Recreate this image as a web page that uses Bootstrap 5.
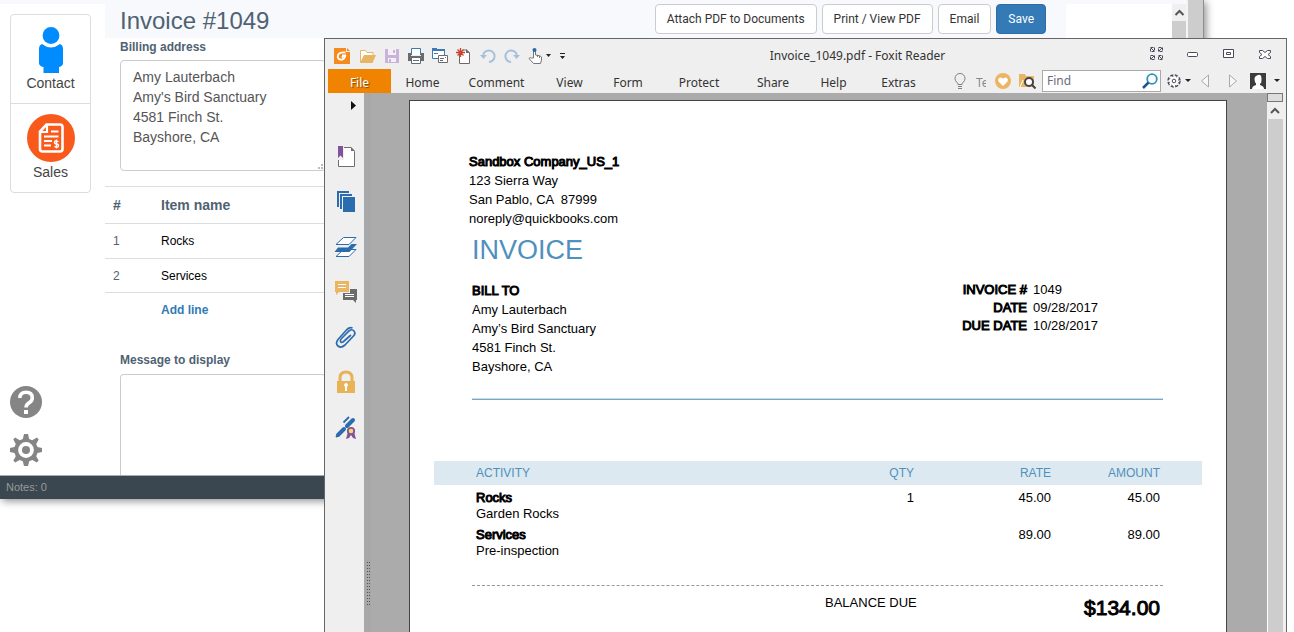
<!DOCTYPE html>
<html lang="en">
<head>
<meta charset="utf-8">
<meta name="viewport" content="width=device-width, initial-scale=1">
<title>Invoice #1049</title>
<link href="https://cdn.jsdelivr.net/npm/bootstrap@5.3.0/dist/css/bootstrap.min.css" rel="stylesheet">
<style>
body{font-family:"Liberation Sans",Arial,sans-serif;font-size:12px;background:#fff;color:#000}
button{font-family:inherit}
svg{display:block;flex:none}
.plain{border:0;background:none;padding:0;color:inherit}
/* application window */
.app-win{margin-right:90px;background:#fff;border-right:1px solid #8e8e8e;box-shadow:2px 2px 8px rgba(0,0,0,.45)}
.app-strip{height:4px;background:#f7f9fc}
.app-side{width:105px;padding:10px 0 9px 10px}
.side-card{width:81px;border:1px solid #ddd;border-radius:4px;font-size:14px;line-height:20px;color:#444}
.side-card button{display:block;width:100%}
.side-card button:first-child{border-bottom:1px solid #ddd;padding:12px 0 10px}
.side-card button:last-child{padding:10px 0}
.app-head{height:34px;background:#f7f9fc;padding:0 20px 0 15px;gap:5px}
.app-head h1{font-size:24px;line-height:34px;color:#4f6273}
.btn-app{font:12px/18px Roboto,sans-serif;padding:5px 11px;border:1px solid #ccc;border-radius:4px;background:#fff;color:#333}
.btn-app.primary{background:#337ab7;border-color:#2e6da4;color:#fff}
.app-blank{width:106px;background:#fff}
.app-scroll{width:14px;background:#f0f0f0}
.app-scroll .thumb,.app-outer{background:#cdcdcd}
.app-outer{width:17px;border-left:2px solid #f4f4f4}
.form-pad{padding-left:15px}
.field-label{display:block;font-weight:700;color:#4f6273;line-height:18px}
.field-box{display:block;width:206px;border:1px solid #ccc;border-radius:4px;padding:6px 12px;font-size:14px;line-height:20px;color:#555;resize:none;overflow:hidden}
.address{height:111px;margin-top:4px}
.message{height:101px;margin-top:5px;border-bottom:0;border-radius:4px 4px 0 0}
.size-grip{right:1px;bottom:2px}
.lines{width:100%;border-top:1px solid #ddd;margin-top:15px}
.lines th,.lines td{border-bottom:1px solid #ddd;padding:0 8px;line-height:18px}
.lines th{font-size:14px;color:#4f6273;height:37px}
.lines tbody tr:first-child td{height:35px}
.lines tbody tr:last-child td{height:34px}
.lines .num{width:48px;color:#4f6273}
.add-line{font-weight:700;color:#337ab7;text-decoration:none;margin-left:56px;line-height:18px}
.app-foot{background:#3a4750;border-top:1px solid #aaa;color:#999;font-size:11px;line-height:23px;padding-left:6px}
/* reader window */
.reader{position:absolute;left:324px;right:7px;top:38px;bottom:0;background:#efefef;border:1px solid #666;border-bottom:0;overflow:hidden;font-family:"Noto Sans",Tahoma,sans-serif;color:#333}
.title-row{height:30px;padding:4px 13px 0 9px}
.title-row .tools{gap:8px}
.title-row .tools button:first-child{margin-right:2px}
.caption{font-size:12px;line-height:18px}
.win-ctl{gap:20px;margin-bottom:4px}
.tab-row{height:24px;padding:0 5px 0 3px}
.tabs{display:grid;grid-template-columns:63px 63px 85px 61px 56px 86px 62px 59px 71px}
.tabs button{line-height:20px;padding-top:4px;text-align:center}
.tabs .file{background:#f08300;color:#fff;text-shadow:1px 1px 1px #7a4a10}
.tab-tools{gap:6px}
.tell,.bulb{margin-right:3px}
.tell{width:10px;overflow:hidden;color:#888;line-height:20px;padding-top:3px}
.heart{margin-right:2px}
.prev{margin:0 12px 0 3px}
.next{margin-right:6px}
.find{width:119px;height:22px;border:1px solid #aaa;background:#fff;padding-right:2px}
.find input{width:94px;border:0;outline:0;background:none;padding:0 4px;line-height:18px}
.find input::placeholder{color:#6b6b7a}
.rail{width:39px;padding:6px 0 0 9px}
.rail-list{gap:21px;margin-top:34px}
.grip{width:7px;background:#a6a8aa}
.canvas-area{background:#ababab}
.grip svg{margin-top:468px}
.sheet{margin:7px 40px 0 38px;border:1px solid #444;border-bottom:0;background:#fff;padding:51px 24px 0;font:13px/19px "Liberation Sans",Arial,sans-serif;color:#000}
.heavy{font-weight:400;-webkit-text-stroke:1px #000}
.company{padding-left:35px}
.sheet-in{padding:0 38px}
.sheet h2{font-size:27px;line-height:34px;color:#5090bd;margin:5px 0 14px}
.meta{display:grid;grid-template-columns:auto 67px;column-gap:6px;line-height:18px;margin-right:64px;align-content:start}
.meta dt{text-align:right}
.rule{height:2px;background:linear-gradient(#c8dcea 50%,#78a6c6 50%);margin:22px 39px 61px 38px}
.acts{width:100%;line-height:16px}
.acts th{background:#dce9f1;color:#5090bd;font-weight:400;font-size:12px;line-height:24px;padding:0}
.acts td{padding:5px 0 0;vertical-align:top}
.acts .a{padding-left:42px}
.acts .q{width:100px;text-align:right}
.acts .r{width:137px;text-align:right}
.acts .m{width:151px;text-align:right;padding-right:42px}
.due{margin:26px 39px 0 38px;border-top:1px dashed #999;padding-top:7px}
.due>div{width:338px;padding-right:3px}
.total{font-size:21px;line-height:30px}
.r-scroll{width:19px;background:#efefef}
.r-scroll .split{height:9px;border:1px solid #777;background:#ddd}
.r-scroll .up{height:17px}
.r-scroll .thumb{background:#cdcdcd;border-left:1px solid #fff}
.r-scroll>*{width:16px}
</style>
</head>
<body>
<div class="position-relative min-vh-100 overflow-hidden">
<div class="app-win">
  <div class="d-flex">
    <div class="flex-grow-1">
      <div class="app-strip"></div>
      <div class="d-flex">
        <nav class="app-side d-flex flex-column flex-shrink-0">
          <div class="side-card">
            <button class="plain"><svg class="mx-auto" width="24" height="46" viewBox="0 0 24 46" fill="#008bff"><circle cx="12" cy="8.500" r="8.400"/><path d="M3 17q9 7 18 0q3 1 3 5v14q0 3-4 4v6H4.500v-6Q0 39 0 36V22q0-4 3-5z"/></svg>Contact</button>
            <button class="plain"><svg class="mx-auto" width="48" height="48" viewBox="0 0 48 48"><circle cx="24" cy="24" r="24" fill="#f95a1c"/><path d="M19.500 10.500H33q2.500 0 2.500 2.500v22q0 2.500-2.500 2.500H15.500q-2.500 0-2.500-2.500V17.500z" fill="none" stroke="#fff" stroke-width="2.600"/><path d="M20 10.500v7.500h-7M24 17.500h7.500M17 22.500h14.500M17 27h8M17 31.500h7" stroke="#fff" stroke-width="2.200" fill="none"/><path d="M31.500 27.500q-4-1.500-4 .5t2 2t2 2t-4 .5M29.500 25.500v9" stroke="#fff" stroke-width="1.400" fill="none"/></svg>Sales</button>
          </div>
          <div class="mt-auto d-grid gap-3 justify-content-start">
            <button class="plain" aria-label="Help"><svg width="32" height="32" viewBox="0 0 32 32"><circle cx="16" cy="16" r="16" fill="#858585"/><path d="M9.800 12q0-5.700 6.200-5.700T22.300 12q0 2.700-3.100 4.800T16 21.500" fill="none" stroke="#fff" stroke-width="3.600"/><path d="M14 24h4v4h-4z" fill="#fff"/></svg></button>
            <button class="plain" aria-label="Settings"><svg width="32" height="32" viewBox="0 0 32 32"><path d="M14 0h4l1.200 5 3 1.300 4.700-2.700 1.800 1.800-2.500 4.500L27.500 13l4.500 1v4l-4.500 1-1.300 3.200 2.500 4.400-1.900 1.900-4.500-2.600-3.100 1.300L18 32h-4l-1.200-4.800-3.100-1.300-4.500 2.600-1.900-1.900 2.500-4.400L4.500 19 0 18v-4l4.500-1 1.300-3.100-2.500-4.500 1.800-1.800 4.700 2.700 3-1.300z" fill="#858585"/><circle cx="16" cy="16" r="7.900" fill="#fff"/><circle cx="16" cy="16" r="4" fill="#858585"/></svg></button>
          </div>
        </nav>
        <main class="flex-grow-1">
          <div class="app-head d-flex align-items-start">
            <h1 class="mb-0 me-auto">Invoice #1049</h1>
            <button class="btn btn-app">Attach PDF to Documents</button>
            <button class="btn btn-app">Print / View PDF</button>
            <button class="btn btn-app">Email</button>
            <button class="btn btn-app primary">Save</button>
          </div>
          <div class="form-pad">
            <label class="field-label" for="addr">Billing address</label>
            <div class="position-relative d-inline-block align-top">
              <textarea id="addr" class="field-box address">Amy Lauterbach
Amy's Bird Sanctuary
4581 Finch St.
Bayshore, CA</textarea>
              <svg class="size-grip position-absolute" width="8" height="5" viewBox="0 0 8 5" fill="#bbb"><path d="M1 3h2v2H1zM4 3h2v2H4zM4 0h2v2H4z"/></svg>
            </div>
          </div>
          <table class="lines">
            <thead><tr><th class="num">#</th><th>Item name</th></tr></thead>
            <tbody><tr><td class="num">1</td><td>Rocks</td></tr><tr><td class="num">2</td><td>Services</td></tr></tbody>
          </table>
          <div class="pt-2 pb-4"><a href="#" class="add-line">Add line</a></div>
          <div class="form-pad">
            <label class="field-label pt-2" for="msg">Message to display</label>
            <textarea id="msg" class="field-box message"></textarea>
          </div>
        </main>
        <div class="app-blank flex-shrink-0"></div>
        <div class="app-scroll flex-shrink-0 d-flex flex-column">
          <svg width="14" height="17" viewBox="0 0 14 17"><path d="M3.500 11L7.500 7l4 4" fill="none" stroke="#555" stroke-width="2"/></svg>
          <div class="thumb flex-grow-1"></div>
        </div>
      </div>
    </div>
    <div class="app-outer flex-shrink-0"></div>
  </div>
  <footer class="app-foot">Notes: 0</footer>
</div>

<section class="reader d-flex flex-column">
  <header class="title-row d-flex align-items-center">
    <div class="tools d-flex align-items-center">
      <button class="plain" aria-label="Reader"><svg width="16" height="16" viewBox="0 0 16 16"><path d="M0 0h12v4h4v12H0z" fill="#f58a1f"/><path d="M13 0l3 3h-3z" fill="#f58a1f"/><path d="M11.500 4.500Q4 4 3.700 8.500q.3 3.500 4 3.200Q11 11 11.300 7.500H8M7.800 9.500l2.500-2" fill="none" stroke="#fff" stroke-width="1.800"/></svg></button>
      <button class="plain" aria-label="Open"><svg width="16" height="16" viewBox="0 0 16 16"><path d="M.5 14V2.500h5l1.500 2h6V7" fill="#fff" stroke="#e8b565"/><path d="M0 15L4 7h12l-3.500 8z" fill="#e8b565"/></svg></button>
      <button class="plain" aria-label="Save"><svg width="16" height="16" viewBox="0 0 16 16"><path d="M1 1h14v14H1z" fill="#c9b3d8"/><path d="M4 1h8v6H4zM4 10h8v4H4z" fill="#f4f0f6"/><path d="M9 2h2v3H9zM5 11h2v3H5z" fill="#c9b3d8"/></svg></button>
      <button class="plain" aria-label="Print"><svg width="16" height="16" viewBox="0 0 16 16"><path d="M0 5h3v3h10V5h3v8H0z" fill="#6b6b6b"/><path d="M3.500 7V.5h9V7" fill="#fff" stroke="#3c79b5"/><path d="M3.500 9.500h9v6h-9z" fill="#fff" stroke="#6b6b6b"/><path d="M5 12.500h6" stroke="#3c79b5"/></svg></button>
      <button class="plain" aria-label="Windows"><svg width="16" height="16" viewBox="0 0 16 16"><path d="M.5 1.500h12v9H.5z" fill="#fff" stroke="#3c79b5"/><path d="M0 0h5v1h8v2H0z" fill="#3c79b5"/><path d="M2 5.500h4" stroke="#3c79b5"/><path d="M6.500 7.500h9v7h-9z" fill="#fff" stroke="#6b6b6b"/><path d="M8 10.500h4M8 12.500h3M13 9.500h1" stroke="#6b6b6b"/></svg></button>
      <button class="plain" aria-label="New"><svg width="16" height="16" viewBox="0 0 16 16"><path d="M3.500 6v9.500h10V5l-3-3H7" fill="#fff" stroke="#6b6b6b"/><path d="M10 1l4 4h-4z" fill="#6b6b6b"/><path d="M4.500 0v9M0 4.500h9M1.500 1.500l6 6M7.500 1.500l-6 6" stroke="#c9432d" stroke-width="1.300"/></svg></button>
      <button class="plain" aria-label="Undo"><svg width="16" height="16" viewBox="0 0 16 16"><path d="M3 8a5.800 5.800 0 1 1 6 6" fill="none" stroke="#a5bfdc" stroke-width="2"/><path d="M0 7h7l-3.500 4z" fill="#a5bfdc"/></svg></button>
      <button class="plain" aria-label="Redo"><svg width="16" height="16" viewBox="0 0 16 16"><path d="M13 8a5.800 5.800 0 1 0-6 6" fill="none" stroke="#a5bfdc" stroke-width="2"/><path d="M9 7h7l-3.500 4z" fill="#a5bfdc"/></svg></button>
      <button class="plain" aria-label="Hand tool"><svg width="24" height="16" viewBox="0 0 24 16"><path d="M5.500 10V3q0-1.500 1-1.500t1 1.500v4q5.500.5 6 2v3l-1 3.500H5.500L1 10.500q1-1.500 2.500-.5z" fill="#fff" stroke="#777"/><circle cx="6.500" cy="2" r="2" fill="#2c68a8"/><path d="M9.500 7v2M11.500 8v2" stroke="#777"/><path d="M18 6h5l-2.500 3z" fill="#222"/></svg></button>
      <button class="plain" aria-label="Customize toolbar"><svg width="6" height="16" viewBox="0 0 6 16"><path d="M0 5h5v1H0zM0 8h5l-2.500 3z" fill="#222"/></svg></button>
    </div>
    <div class="caption flex-grow-1 text-center">Invoice_1049.pdf - Foxit Reader</div>
    <div class="win-ctl d-flex">
      <button class="plain" aria-label="Full screen"><svg width="16" height="16" viewBox="0 0 16 16" fill="none" stroke="#4a4a5c"><path d="M1.500 1.500h4v4h-4zM9.500 1.500h4v4h-4zM1.500 9.500h4v4h-4zM9.500 9.500h4v4h-4z" stroke-dasharray="3 1"/><path d="M2 2l3 3M13 2l-3 3M2 13l3-3M13 13l-3-3"/></svg></button>
      <button class="plain" aria-label="Minimize"><svg width="16" height="16" viewBox="0 0 16 16"><rect x="2.500" y="6.500" width="10" height="4" rx="1" fill="#fff" stroke="#4a4a5c"/></svg></button>
      <button class="plain" aria-label="Maximize"><svg width="16" height="16" viewBox="0 0 16 16"><path d="M2.500 3.500h10v8h-10zM5.500 6.500h4v2h-4z" fill="#fff" stroke="#4a4a5c"/></svg></button>
      <button class="plain" aria-label="Close"><svg width="16" height="16" viewBox="0 0 16 16"><path d="M2.500 4.500h3L8 6.500l2.500-2h3v2L11 8.500l2.500 2v2h-3L8 10.500l-2.500 2h-3v-2l2.500-2-2.500-2z" fill="#fff" stroke="#4a4a5c"/></svg></button>
    </div>
  </header>
  <div class="tab-row d-flex">
    <div class="tabs">
      <button class="plain file">File</button><button class="plain">Home</button><button class="plain">Comment</button><button class="plain">View</button><button class="plain">Form</button><button class="plain">Protect</button><button class="plain">Share</button><button class="plain">Help</button><button class="plain">Extras</button>
    </div>
    <div class="tab-tools d-flex align-items-center ms-auto">
      <svg class="bulb" width="14" height="16" viewBox="0 0 14 16" fill="none" stroke="#808080"><path d="M5 11.500Q5 10 3.500 9A5 5 0 1 1 10.500 9Q9 10 9 11.500zM5 13.500h4M5 15.500h4"/></svg>
      <span class="tell">Tell</span>
      <button class="plain heart" aria-label="Favorites"><svg width="16" height="16" viewBox="0 0 16 16"><circle cx="8" cy="8" r="8" fill="#ebb563"/><path d="M8 13L3.500 8.500Q2.500 6.500 4 5t4 .8q2.500-2.300 4-.8t.5 3.500z" fill="#fff"/></svg></button>
      <button class="plain" aria-label="Search files"><svg width="17" height="16" viewBox="0 0 17 16"><path d="M0 1h6l1 2h8v11H0z" fill="#e8b565"/><circle cx="10" cy="9" r="4" fill="#fff" stroke="#444" stroke-width="2"/><path d="M13 12l3.500 3.500" stroke="#444" stroke-width="2"/><path d="M1 14l3-7" stroke="#fff"/></svg></button>
      <div class="find d-flex align-items-center justify-content-between"><input type="text" aria-label="Find" placeholder="Find"><svg width="16" height="16" viewBox="0 0 16 16" fill="none"><circle cx="10" cy="6" r="4.800" stroke="#2e93be" stroke-width="1.800"/><path d="M6.500 9.500L1 15" stroke="#24508e" stroke-width="2.500"/></svg></div>
      <button class="plain" aria-label="Options"><svg width="24" height="16" viewBox="0 0 24 16" fill="none" stroke="#4a4a5c"><circle cx="7" cy="8" r="6" fill="#fff" stroke-width="1.400" stroke-dasharray="3.200 1.512"/><circle cx="7" cy="8" r="4.800" stroke-width="1" stroke-dasharray="1.270 2.500" stroke-dashoffset="2.500"/><circle cx="7" cy="8" r="1.800"/><path d="M18 6h6l-3 3z" fill="#222" stroke="none"/></svg></button>
      <button class="plain prev" aria-label="Previous"><svg width="10" height="16" viewBox="0 0 10 16"><path d="M8.500 2v12L1.500 8z" fill="#f7f7f7" stroke="#aaa"/></svg></button>
      <button class="plain next" aria-label="Next"><svg width="10" height="16" viewBox="0 0 10 16"><path d="M1.500 2v12l7-6z" fill="#f7f7f7" stroke="#aaa"/></svg></button>
      <button class="plain" aria-label="Account"><svg width="31" height="16" viewBox="0 0 31 16"><path d="M0 0h16v16H0z" fill="#3c3c3c"/><path d="M2 16q0-3 4-4v-1.500Q4.500 9 4.500 6T8 2t3.500 4T10 10.500V12q4 1 4 4z" fill="#fff"/><path d="M24 6h6l-3 3z" fill="#222"/></svg></button>
    </div>
  </div>
  <div class="d-flex flex-grow-1 overflow-hidden">
    <aside class="rail flex-shrink-0">
      <svg width="24" height="12" viewBox="0 0 24 12"><path d="M17 2l5 4.500-5 4.500z" fill="#111"/></svg>
      <div class="rail-list d-grid justify-content-start">
        <button class="plain" aria-label="Bookmarks"><svg width="24" height="24" viewBox="0 0 24 24"><path d="M4.500 2.500h12.500l3.500 4v15h-16z" fill="#fff" stroke="#6f6f6f"/><path d="M17 2v4h4z" fill="#6f6f6f"/><path d="M3 1h7v14H3z" fill="#efefef"/><path d="M4 1h5v12l-2.500-2.500L4 13z" fill="#81539a"/></svg></button>
        <button class="plain" aria-label="Pages"><svg width="24" height="24" viewBox="0 0 24 24"><path d="M9 7h12v15H9z" fill="#2b6cae"/><path d="M4 17V2h11M7 19V5h11" fill="none" stroke="#2b6cae" stroke-width="2"/></svg></button>
        <button class="plain" aria-label="Layers"><svg width="24" height="24" viewBox="0 0 24 24"><path d="M9.500 2.500H22l-7 7H2zM9.500 14.500H22l-7 7H2z" fill="#fff" stroke="#2b6cae"/><path d="M17.500 9H23l-7.500 8H.500L4 12.500h10z" fill="#2b6cae"/></svg></button>
        <button class="plain" aria-label="Comments"><svg width="24" height="24" viewBox="0 0 24 24"><path d="M1 1h14v11H5l-3 3v-3H1z" fill="#ebb563"/><path d="M9 13h7V9h7v11h-1v3l-3-3H9z" fill="#6b6b6b"/><path d="M4 4.500h8M4 7.500h8M11 14.500h9M11 16.500h9" stroke="#fff"/></svg></button>
        <button class="plain" aria-label="Attachments"><svg width="24" height="24" viewBox="0 0 24 24"><path d="M17 10l-8 7q-2 1-2.500-.5T8 13l7-7q3-2.500 5 0t-.5 5l-8.500 9q-4 3.500-7 1t0-6.500l8-9q3-4 6.500-2.500" fill="none" stroke="#2b6cae" stroke-width="1.700"/></svg></button>
        <button class="plain" aria-label="Security"><svg width="24" height="24" viewBox="0 0 24 24"><path d="M6 12V8q0-6 6-6t6 6v4" fill="none" stroke="#e8b257" stroke-width="3"/><path d="M3 11h18v12H3z" fill="#e8b257"/><path d="M12 13a2 2 0 0 1 1 3.700V21h-2v-4.300A2 2 0 0 1 12 13z" fill="#fff"/></svg></button>
        <button class="plain" aria-label="Signatures"><svg width="24" height="24" viewBox="0 0 24 24"><path d="M4 20l6-6M13 11l6-6" stroke="#2b6cae" stroke-width="4" stroke-linecap="round"/><path d="M9.500 7.500l5.500-5.500M2 22l3-3" stroke="#2b6cae" stroke-width="1.800"/><path d="M14 17l-2 7 3-1 2-3 2 3 3 1-2-7z" fill="#81539a"/><circle cx="17" cy="16" r="3.200" fill="#fbd968" stroke="#81539a" stroke-width="1.800"/></svg></button>
      </div>
    </aside>
    <div class="grip flex-shrink-0"><svg width="7" height="44" viewBox="0 0 7 44"><path d="M3.500 1v43M5.500 1v43" stroke="#555" stroke-dasharray="1 2"/></svg></div>
    <div class="canvas-area flex-grow-1">
      <article class="sheet h-100">
        <div class="company"><div class="heavy">Sandbox Company_US_1</div><div>123 Sierra Way</div><div>San Pablo, CA &nbsp;87999</div><div>noreply@quickbooks.com</div></div>
        <div class="sheet-in">
          <h2 class="fw-normal">INVOICE</h2>
          <div class="d-flex justify-content-between">
            <div><div class="heavy">BILL TO</div><div>Amy Lauterbach</div><div>Amy’s Bird Sanctuary</div><div>4581 Finch St.</div><div>Bayshore, CA</div></div>
            <dl class="meta mb-0"><dt class="heavy">INVOICE #</dt><dd class="mb-0">1049</dd><dt class="heavy">DATE</dt><dd class="mb-0">09/28/2017</dd><dt class="heavy">DUE DATE</dt><dd class="mb-0">10/28/2017</dd></dl>
          </div>
        </div>
        <div class="rule"></div>
        <table class="acts">
          <thead><tr><th class="a">ACTIVITY</th><th class="q">QTY</th><th class="r">RATE</th><th class="m">AMOUNT</th></tr></thead>
          <tbody>
            <tr><td class="a"><div class="heavy">Rocks</div>Garden Rocks</td><td class="q">1</td><td class="r">45.00</td><td class="m">45.00</td></tr>
            <tr><td class="a"><div class="heavy">Services</div>Pre-inspection</td><td class="q"></td><td class="r">89.00</td><td class="m">89.00</td></tr>
          </tbody>
        </table>
        <div class="due"><div class="d-flex justify-content-between ms-auto"><span>BALANCE DUE</span><span class="total heavy">$134.00</span></div></div>
      </article>
    </div>
    <div class="r-scroll flex-shrink-0 d-flex flex-column">
      <div class="split"></div>
      <svg class="up" viewBox="0 0 16 17"><path d="M4 11l4-4 4 4" fill="none" stroke="#555" stroke-width="2"/></svg>
      <div class="thumb flex-grow-1"></div>
    </div>
  </div>
</section>
</div>
<script src="https://cdn.jsdelivr.net/npm/bootstrap@5.3.0/dist/js/bootstrap.bundle.min.js"></script>
</body>
</html>
